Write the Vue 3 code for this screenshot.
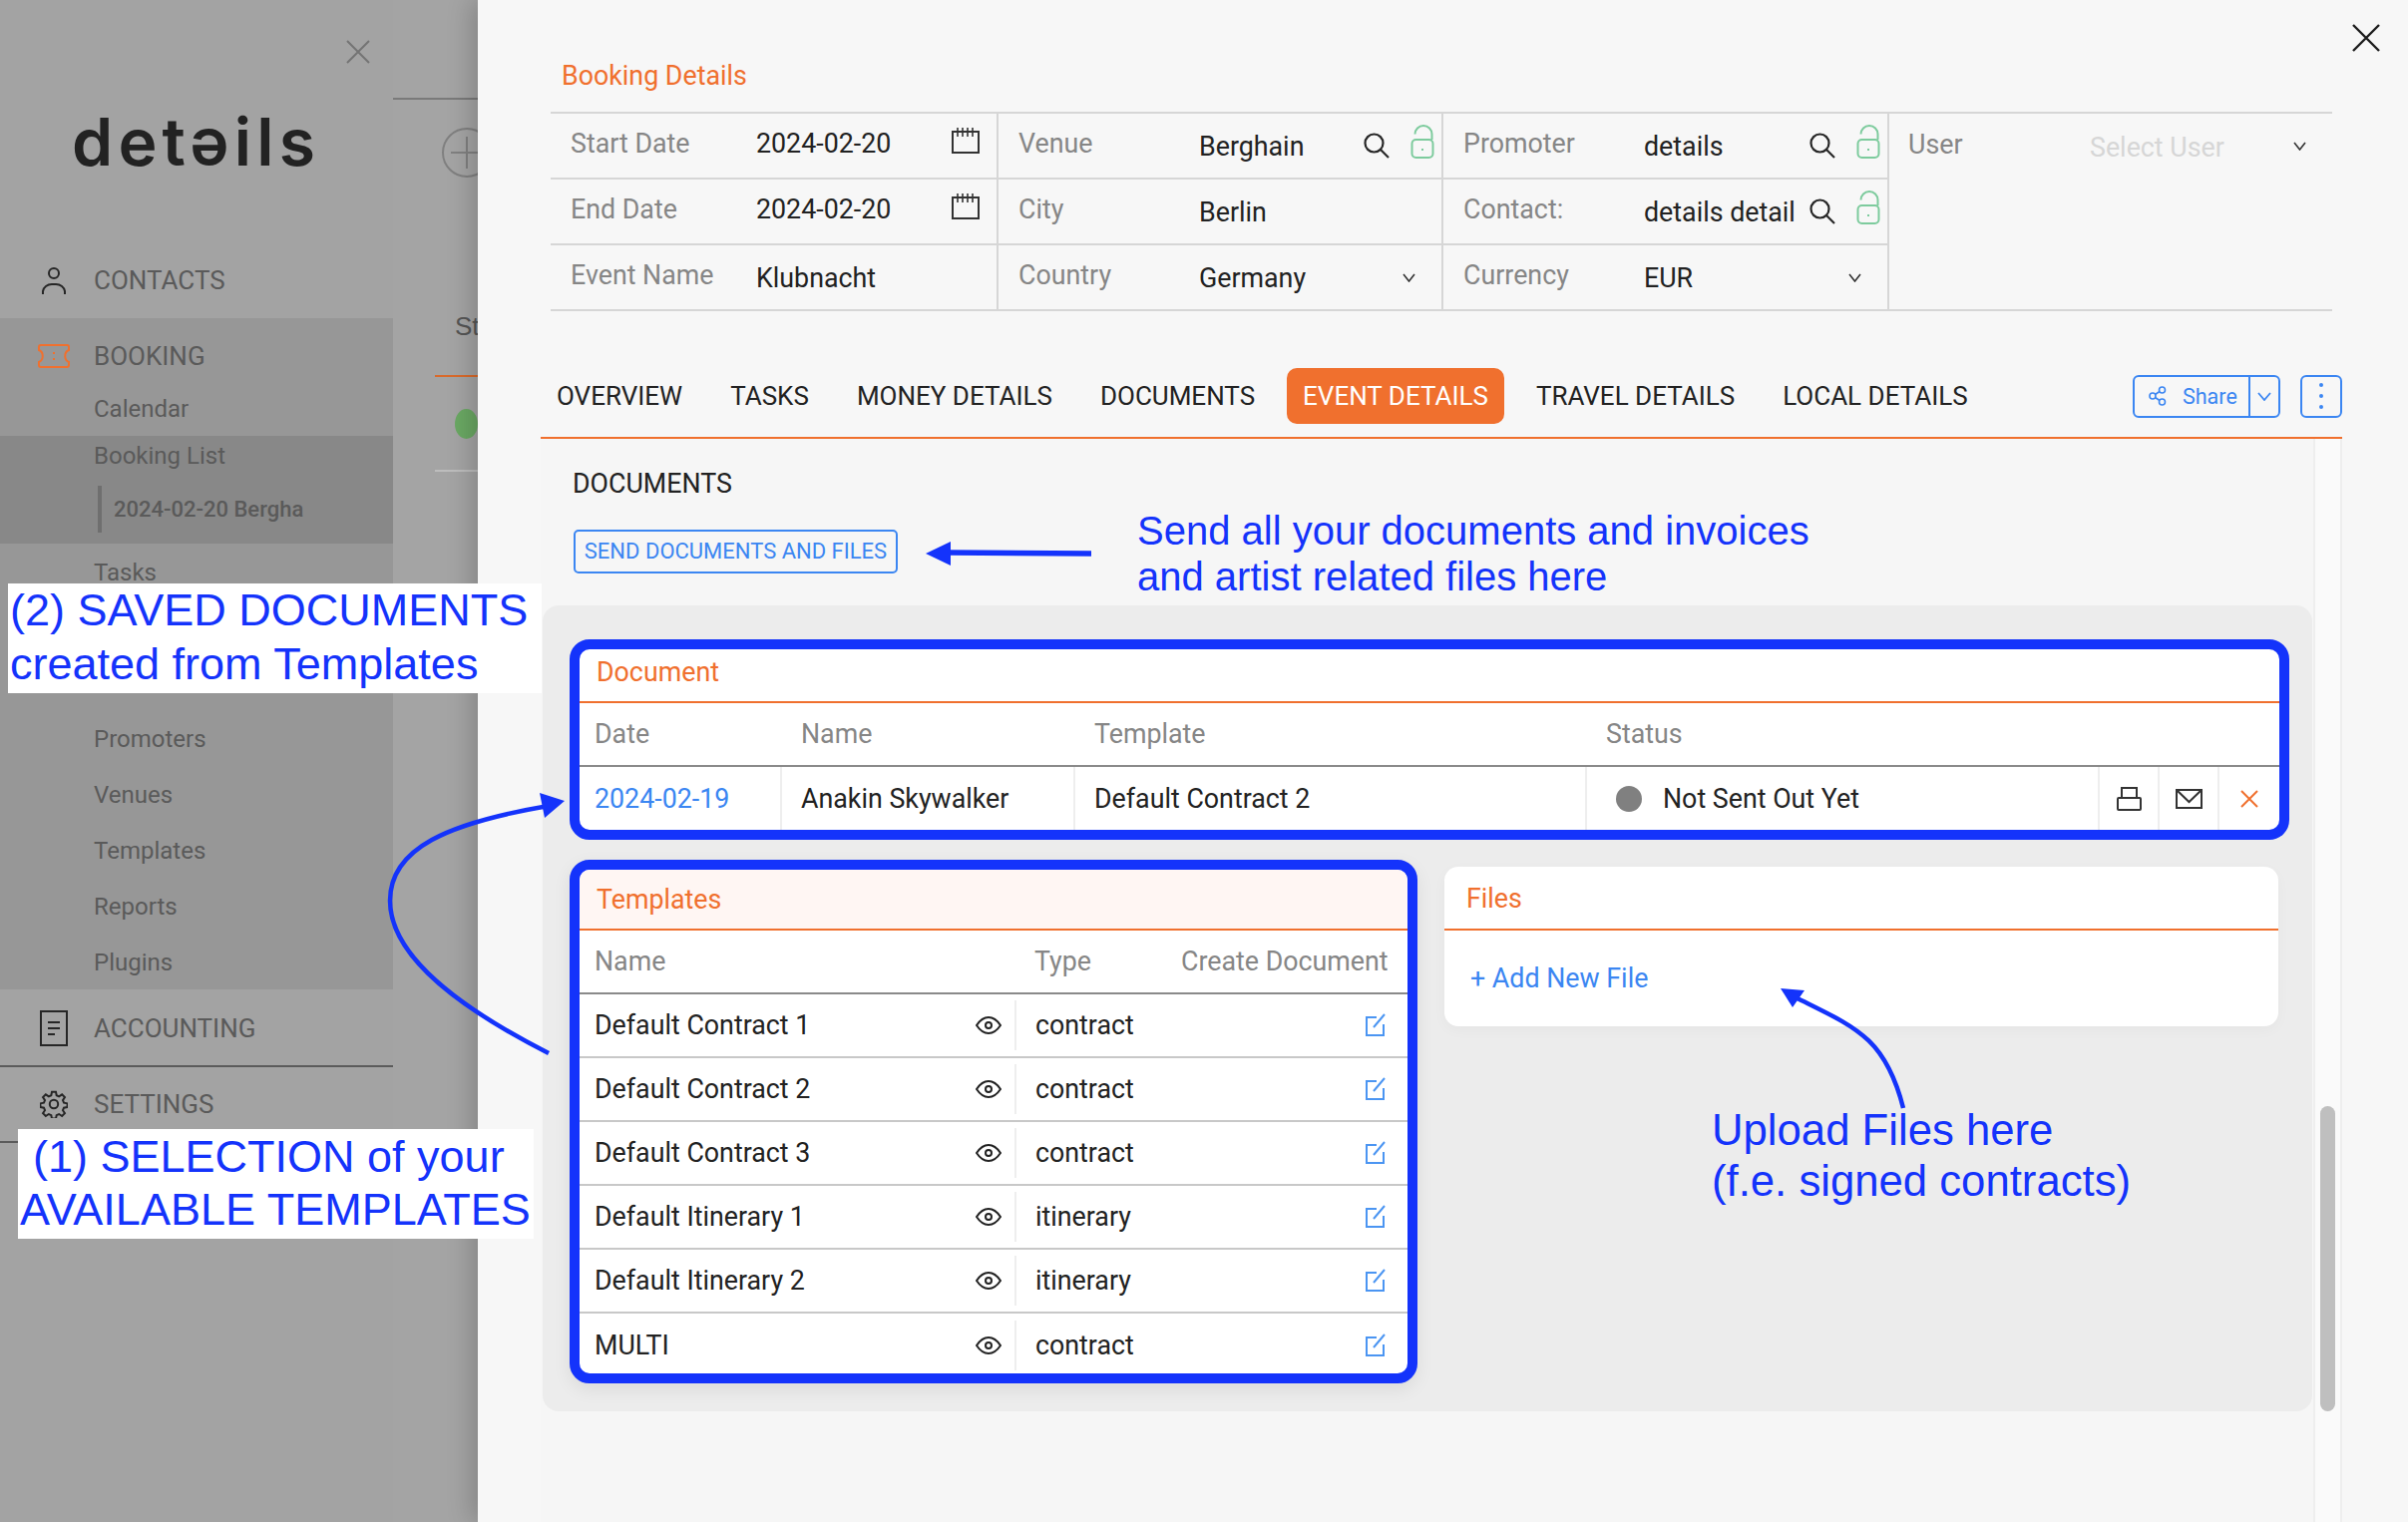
<script setup>
const row1 = [
  { label: 'Start Date', value: '2024-02-20', icon: 'cal' },
  { label: 'End Date', value: '2024-02-20', icon: 'cal' },
  { label: 'Event Name', value: 'Klubnacht', low: true },
]
const row2 = [
  { label: 'Venue', value: 'Berghain', icon: 'find', low: true },
  { label: 'City', value: 'Berlin', low: true },
  { label: 'Country', value: 'Germany', icon: 'drop', low: true },
]
const row3 = [
  { label: 'Promoter', value: 'details', icon: 'find', low: true },
  { label: 'Contact:', value: 'details detail', icon: 'find', low: true },
  { label: 'Currency', value: 'EUR', icon: 'drop', low: true },
]
const columns = [
  { w: 449, lw: 186, pad: 20, rows: row1 },
  { w: 446, lw: 181, pad: 20, rows: row2 },
  { w: 447, lw: 181, pad: 20, rows: row3 },
]
const tabs = ['OVERVIEW', 'TASKS', 'MONEY DETAILS', 'DOCUMENTS', 'EVENT DETAILS', 'TRAVEL DETAILS', 'LOCAL DETAILS']
const subItems = ['Promoters', 'Venues', 'Templates', 'Reports', 'Plugins']
const templates = [
  { name: 'Default Contract 1', type: 'contract' },
  { name: 'Default Contract 2', type: 'contract' },
  { name: 'Default Contract 3', type: 'contract' },
  { name: 'Default Itinerary 1', type: 'itinerary' },
  { name: 'Default Itinerary 2', type: 'itinerary' },
  { name: 'MULTI', type: 'contract' },
]
</script>

<template>
  <div class="page">
    <aside class="sidebar">
      <div class="side-top">
        <svg class="side-close" width="24" height="24" viewBox="0 0 24 24"><path d="M1 1 23 23M23 1 1 23" stroke="#747474" stroke-width="2" fill="none" /></svg>
        <div class="logo">detəils</div>
      </div>
      <div class="nav-main">
        <svg class="person" width="24" height="28" viewBox="0 0 24 28" fill="none" stroke="#262626" stroke-width="2"><circle cx="12" cy="7" r="5" /><path d="M1 28v-3a9 8 0 0 1 9-7h4a9 8 0 0 1 9 7v3" /></svg>
        <span>CONTACTS</span>
      </div>
      <div class="band">
        <div class="nav-main">
          <svg class="ticket" width="32" height="24" viewBox="0 0 32 24" fill="none" stroke="#f0702e" stroke-width="2"><path d="M3 1h26a2 2 0 0 1 2 2v3c-5 2-5 10 0 12v3a2 2 0 0 1-2 2H3a2 2 0 0 1-2-2v-3c5-2 5-10 0-12V3a2 2 0 0 1 2-2Z" /><path d="M16 8v2M16 14v2" /></svg>
          <span>BOOKING</span>
        </div>
        <div class="sub calendar">Calendar</div>
        <div class="band-dark">
          <div class="sub list">Booking List</div>
          <div class="current">2024-02-20 Bergha</div>
        </div>
        <div class="sub item tasks">Tasks</div>
        <div v-for="s in subItems" :key="s" class="sub item">{{ s }}</div>
      </div>
      <div class="nav-main ruled">
        <svg width="28" height="36" viewBox="0 0 28 36" fill="none" stroke="#262626" stroke-width="2"><rect x="1" y="1" width="26" height="34" /><path d="M8 12h12M8 18h12M8 24h7" /></svg>
        <span>ACCOUNTING</span>
      </div>
      <div class="nav-main ruled settings">
        <svg width="28" height="28" viewBox="0 0 24 24" fill="none" stroke="#262626" stroke-width="1.7"><circle cx="12" cy="12" r="3.6" /><path d="M10.300 1.500h3.400l.6 3 2.100.9 2.600-1.700 2.400 2.400-1.700 2.600.9 2.100 3 .6v3.200l-3 .6-.9 2.100 1.700 2.600-2.400 2.400-2.600-1.700-2.100.9-.6 3h-3.400l-.6-3-2.100-.9-2.600 1.700-2.400-2.400 1.700-2.600-.9-2.100-3-.6v-3.200l3-.6.9-2.100-1.700-2.600 2.400-2.400 2.600 1.700 2.100-.9Z" /></svg>
        <span>SETTINGS</span>
      </div>
    </aside>

    <div class="back">
      <div class="back-rule"></div>
      <svg class="back-plus" width="52" height="52" viewBox="0 0 52 52" fill="none" stroke="#808080" stroke-width="2"><circle cx="26" cy="26" r="24" /><path d="M26 10v32M10 26h32" /></svg>
      <div class="back-head">St</div>
      <div class="back-row"><i></i></div>
    </div>

    <section class="drawer">
      <svg class="drawer-close" width="28" height="28" viewBox="0 0 28 28"><path d="M1 1 27 27M27 1 1 27" stroke="#1c1c1c" stroke-width="2.400" fill="none" /></svg>
      <h2 class="title">Booking Details</h2>

      <div class="form">
        <div v-for="(col, c) in columns" :key="c" class="col" :style="{ width: col.w + 'px' }">
          <div v-for="r in col.rows" :key="r.label" class="cell" :style="{ paddingLeft: col.pad + 'px' }">
            <span class="label" :style="{ width: col.lw + 'px' }">{{ r.label }}</span>
            <span class="value" :class="{ low: r.low }">{{ r.value }}</span>
            <svg v-if="r.icon === 'cal'" class="ic-cal" width="28" height="26" viewBox="0 0 28 26" fill="none" stroke="#333" stroke-width="2"><rect x="1" y="4" width="26" height="21" /><path d="M6 0v9M11 0v9M16 0v9M21 0v9" stroke-width="1.600" /></svg>
            <template v-if="r.icon === 'find'">
              <svg class="ic-find" width="26" height="26" viewBox="0 0 26 26" fill="none" stroke="#262626" stroke-width="2.200"><circle cx="10.500" cy="10.500" r="9" /><path d="M17 17 25 25" /></svg>
              <svg class="ic-lock" width="24" height="34" viewBox="0 0 24 34" fill="none" stroke="#7dcb9d" stroke-width="2"><rect x="1.500" y="15" width="21" height="18" rx="4" /><path d="M21.500 15V9.500a8.500 8.500 0 0 0-17 0" /><path d="M12 24v2" /></svg>
            </template>
            <svg v-if="r.icon === 'drop'" class="ic-drop" width="13" height="9" viewBox="0 0 13 9" fill="none" stroke="#333" stroke-width="1.600"><path d="M1 1 6.500 8 12 1" /></svg>
          </div>
        </div>
        <div class="col last">
          <div class="cell user">
            <span class="label">User</span>
            <span class="value low placeholder">Select User</span>
            <svg class="ic-drop" width="13" height="9" viewBox="0 0 13 9" fill="none" stroke="#333" stroke-width="1.600"><path d="M1 1 6.500 8 12 1" /></svg>
          </div>
        </div>
      </div>

      <nav class="tabs">
        <a v-for="t in tabs" :key="t" class="tab" :class="{ active: t === 'EVENT DETAILS' }">{{ t }}</a>
        <div class="tab-tools">
          <div class="share">
            <span class="share-main">
              <svg width="18" height="20" viewBox="0 0 18 20" fill="none" stroke="#3b86f2" stroke-width="1.600"><circle cx="4" cy="10" r="3" /><circle cx="13.500" cy="4" r="3" /><circle cx="13.500" cy="16" r="3" /><path d="M6.500 8.500 11 5.500M6.500 11.500 11 14.500" /></svg>
              Share
            </span>
            <span class="share-drop"><svg width="14" height="9" viewBox="0 0 14 9" fill="none" stroke="#3b86f2" stroke-width="1.800"><path d="M1 1 7 8 13 1" /></svg></span>
          </div>
          <div class="more"><i></i><i></i><i></i></div>
        </div>
      </nav>

      <div class="lower">
        <div class="content">
          <div class="doc-title">DOCUMENTS</div>
          <button class="send">SEND DOCUMENTS AND FILES</button>
          <div class="panel">
            <div class="card marked">
              <div class="card-head doc-head">Document</div>
              <div class="doc-grid heads">
                <span>Date</span><span>Name</span><span>Template</span><span>Status</span>
              </div>
              <div class="doc-grid row">
                <span class="link">2024-02-19</span>
                <span class="who">Anakin Skywalker</span>
                <span>Default Contract 2</span>
                <span class="status"><i class="dot"></i>Not Sent Out Yet</span>
                <span class="act">
                  <svg width="25" height="24" viewBox="0 0 25 24" fill="none" stroke="#333" stroke-width="2"><path d="M5 11V1h15v10" /><rect x="1" y="11" width="23" height="12" rx="1" /></svg>
                </span>
                <span class="act">
                  <svg width="27" height="20" viewBox="0 0 27 20" fill="none" stroke="#333" stroke-width="2"><rect x="1" y="1" width="25" height="18" /><path d="M1 1 13.500 13 26 1" /></svg>
                </span>
                <span class="act">
                  <svg width="18" height="18" viewBox="0 0 18 18" fill="none" stroke="#f0702e" stroke-width="2"><path d="M1 1 17 17M17 1 1 17" /></svg>
                </span>
              </div>
            </div>

            <div class="bottom">
              <div class="card marked templates">
                <div class="card-head tinted">Templates</div>
                <div class="tpl-heads">
                  <span class="tpl-name">Name</span>
                  <span class="tpl-type">Type</span>
                  <span>Create Document</span>
                </div>
                <div v-for="t in templates" :key="t.name" class="tpl-row">
                  <span class="tpl-name">{{ t.name }}</span>
                  <svg class="eye" width="26" height="18" viewBox="0 0 26 18" fill="none" stroke="#222" stroke-width="2"><path d="M1 9C5 3 9 1 13 1s8 2 12 8c-4 6-8 8-12 8S5 15 1 9Z" /><circle cx="13" cy="9" r="3" /></svg>
                  <span class="tpl-type">{{ t.type }}</span>
                  <svg class="edit" width="22" height="24" viewBox="0 0 22 24" fill="none" stroke="#4b95f2" stroke-width="2"><path d="M12 4H2v18h17V11" /><path d="M9 14 20 1" /></svg>
                </div>
              </div>
              <div class="card files">
                <div class="card-head file-head">Files</div>
                <div class="add">+ Add New File</div>
              </div>
            </div>
          </div>
        </div>
        <div class="track"><div class="thumb"></div></div>
      </div>
    </section>

    <!-- annotations drawn over the screenshot -->
    <div class="note note-saved">(2) SAVED DOCUMENTS<br />created from Templates</div>
    <div class="note note-select">(1) SELECTION of your<br />AVAILABLE TEMPLATES</div>
    <div class="note-plain note-send">Send all your documents and invoices<br />and artist related files here</div>
    <div class="note-plain note-upload">Upload Files here<br />(f.e. signed contracts)</div>
    <svg class="arrows" width="2414" height="1526" viewBox="0 0 2414 1526" fill="none" stroke="#1433fb">
      <path d="M1094 555 948 554" stroke-width="5.500" />
      <path d="M928 555 953 543V567Z" fill="#1433fb" stroke="none" />
      <path d="M550 1056C440 1000 391 950 391 903 391 850 450 825 550 808" stroke-width="4.500" />
      <path d="M566 803 541 795 546 820Z" fill="#1433fb" stroke="none" />
      <path d="M1908 1111C1890 1040 1860 1030 1800 1000" stroke-width="4.500" />
      <path d="M1785 991 1809 993 1797 1010Z" fill="#1433fb" stroke="none" />
    </svg>
  </div>
</template>

<style scoped>
.page {
  position: relative;
  display: flex;
  width: 2414px;
  height: 1526px;
  overflow: hidden;
  font-family: Roboto, "Liberation Sans", sans-serif;
  font-size: 26.8px;
  color: #222;
  background: #a4a4a4;
}
.page * {
  box-sizing: border-box;
}

.sidebar {
  width: 394px;
  flex: none;
  background: #a3a3a3;
  color: #5a5a5a;
}
.side-top {
  position: relative;
  height: 243px;
}
.side-close {
  position: absolute;
  top: 40px;
  right: 23px;
}
.logo {
  position: absolute;
  left: 72px;
  top: 102px;
  font-family: Inter, sans-serif;
  font-weight: 600;
  font-size: 66px;
  line-height: 80px;
  letter-spacing: 5.200px;
  color: #222;
}
.nav-main {
  display: flex;
  align-items: center;
  height: 76px;
  padding-left: 40px;
  font-size: 26px;
}
.nav-main span {
  position: absolute;
  left: 94px;
}
.nav-main .person {
  margin-left: 2px;
}
.nav-main .ticket {
  margin-left: -2px;
}
.band {
  background: #979797;
}
.sub {
  padding-left: 94px;
  font-size: 24px;
}
.calendar {
  height: 42px;
  line-height: 30px;
}
.band-dark {
  height: 108px;
  background: #888;
}
.list {
  height: 40px;
  line-height: 40px;
}
.current {
  margin: 10px 0 0 98px;
  height: 47px;
  line-height: 47px;
  padding-left: 12px;
  border-left: 4px solid #6f6f6f;
  font-size: 22px;
  font-weight: 500;
}
.item {
  height: 56px;
  line-height: 58px;
}
.tasks {
  margin-bottom: 111px;
}
.ruled {
  height: 78px;
  padding-top: 2px;
  border-bottom: 2px solid #5b5b5b;
}
.settings {
  height: 76px;
  padding-top: 0;
}

.back {
  width: 85px;
  flex: none;
  color: #555;
}
.back-rule {
  height: 100px;
  border-bottom: 2px solid #7a7a7a;
}
.back-plus {
  display: block;
  margin: 27px 0 0 48px;
}
.back-head {
  margin: 133px 0 0 62px;
  font-family: "Liberation Sans", sans-serif;
  font-size: 26px;
  height: 64px;
  white-space: nowrap;
}
.back-row {
  margin-left: 42px;
  height: 97px;
  border-top: 2px solid #d96a2c;
  border-bottom: 2px solid #bdbdbd;
  display: flex;
  align-items: center;
}
.back-row i {
  width: 28px;
  height: 30px;
  margin-left: 20px;
  border-radius: 50%;
  background: #6aa863;
}

.drawer {
  position: relative;
  width: 1935px;
  flex: none;
  background: #f7f7f7;
  box-shadow: -6px 0 24px rgba(0, 0, 0, 0.2);
}
.drawer-close {
  position: absolute;
  top: 24px;
  right: 28px;
}
.title {
  margin: 0;
  padding: 60px 0 0 84px;
  height: 112px;
  font-size: 26.8px;
  line-height: 32px;
  font-weight: 400;
  color: #f0702e;
}

.form {
  display: flex;
  margin-left: 73px;
  width: 1786px;
  height: 200px;
  border-top: 2px solid #d6d6d6;
  border-bottom: 2px solid #d6d6d6;
}
.col {
  flex: none;
  border-right: 2px solid #d6d6d6;
}
.col.last {
  flex: 1;
  border: 0;
}
.cell {
  position: relative;
  display: flex;
  align-items: center;
  height: 66px;
  padding-bottom: 4px;
  border-bottom: 2px solid #d6d6d6;
  white-space: nowrap;
}
.cell:last-child {
  height: 64px;
  border-bottom: 0;
}
.cell.user {
  height: 66px;
  padding-left: 19px;
}
.label {
  flex: none;
  color: #868686;
}
.user .label {
  width: 182px;
}
.value.low {
  padding-top: 5px;
}
.placeholder {
  color: #d6d6d6;
}
.ic-cal {
  position: absolute;
  right: 17px;
  top: 14px;
}
.ic-find {
  position: absolute;
  right: 52px;
  top: 19px;
}
.ic-lock {
  position: absolute;
  right: 7px;
  top: 11px;
}
.ic-drop {
  position: absolute;
  right: 26px;
  top: 28px;
}

.tabs {
  display: flex;
  align-items: center;
  margin: 58px 0 0 63px;
  padding: 0 0 14px 16px;
  width: 1806px;
  height: 70px;
  border-bottom: 2px solid #f0702e;
}
.tab {
  margin-right: 48px;
  font-size: 26px;
  white-space: nowrap;
}
.tab.active {
  margin: 0 32px 0 -16px;
  padding: 0 16px;
  height: 56px;
  line-height: 56px;
  border-radius: 10px;
  background: #f0702e;
  color: #fff;
}
.tab-tools {
  display: flex;
  gap: 20px;
  margin-left: auto;
}
.share,
.more {
  display: flex;
  height: 43px;
  border: 2px solid #3b86f2;
  border-radius: 6px;
  color: #3b86f2;
  font-size: 21.500px;
}
.share-main {
  display: flex;
  align-items: center;
  gap: 16px;
  width: 116px;
  padding-left: 14px;
  border-right: 2px solid #3b86f2;
}
.share-drop {
  display: flex;
  align-items: center;
  justify-content: center;
  width: 28px;
}
.more {
  flex-direction: column;
  align-items: center;
  justify-content: center;
  gap: 7px;
  width: 42px;
}
.more i {
  width: 4px;
  height: 4px;
  border-radius: 50%;
  background: #3b86f2;
}

.lower {
  display: flex;
  margin-left: 63px;
  height: 1087px;
}
.content {
  width: 1777px;
  flex: none;
  background: #f6f6f6;
}
.doc-title {
  padding-left: 32px;
  margin-top: 29px;
  height: 32px;
  line-height: 32px;
}
.send {
  display: block;
  margin: 30px 0 0 33px;
  width: 325px;
  height: 44px;
  padding: 0 0 2px;
  background: transparent;
  border: 2px solid #3b86f2;
  border-radius: 5px;
  color: #3b86f2;
  font-family: inherit;
  font-size: 22px;
  white-space: nowrap;
}
.panel {
  margin: 32px 0 0 2px;
  width: 1774px;
  height: 808px;
  padding: 34px 23px 0 27px;
  border-radius: 16px;
  background: #ececec;
}
.card {
  background: #fff;
  border-radius: 14px;
}
.card.marked {
  border: 10px solid #1433fb;
  border-radius: 20px;
  overflow: hidden;
}
.card-head {
  display: flex;
  align-items: center;
  height: 54px;
  padding-left: 17px;
  border-bottom: 2px solid #f0702e;
  color: #f0702e;
}
.doc-head {
  padding-bottom: 6px;
}
.tinted {
  background: #fff6f3;
  height: 61px;
}
.file-head {
  height: 64px;
  padding: 2px 0 0 22px;
}
.doc-grid {
  display: grid;
  grid-template-columns: 201px 294px 513px 514px 60px 60px 1fr;
}
.heads {
  height: 64px;
  align-items: center;
  border-bottom: 2px solid #8a8a8a;
  color: #868686;
}
.heads span {
  padding-left: 21px;
}
.heads span:first-child {
  padding-left: 15px;
}
.row {
  height: 63px;
}
.row > span {
  display: flex;
  align-items: center;
  padding-left: 19px;
  border-left: 2px solid #eee;
}
.row > span:first-child {
  padding-left: 15px;
  border-left: 0;
}
.row > .status {
  padding-left: 29px;
}
.link {
  color: #3b86f2;
}
.dot {
  width: 26px;
  height: 26px;
  margin-right: 21px;
  border-radius: 50%;
  background: #808080;
}
.row > .act {
  justify-content: center;
  padding: 0;
}
.bottom {
  display: flex;
  align-items: flex-start;
  gap: 27px;
  margin-top: 20px;
}
.templates {
  width: 850px;
  height: 525px;
  flex: none;
  box-shadow: 0 6px 18px rgba(0, 0, 0, 0.08);
}
.tpl-heads {
  display: flex;
  align-items: center;
  height: 64px;
  border-bottom: 2px solid #8a8a8a;
  color: #868686;
}
.tpl-heads .tpl-name {
  width: 456px;
}
.tpl-heads .tpl-type {
  width: 147px;
  padding: 0;
  border: 0;
}
.tpl-name {
  padding-left: 15px;
}
.tpl-row {
  position: relative;
  display: flex;
  align-items: center;
  height: 64px;
  border-bottom: 2px solid #c8c8c8;
}
.tpl-row:last-child {
  border-bottom: 0;
}
.tpl-row .tpl-name {
  width: 397px;
}
.eye {
  flex: none;
  width: 26px;
  margin-right: 13px;
}
.tpl-row .tpl-type {
  height: 50px;
  line-height: 50px;
  padding-left: 19px;
  border-left: 2px solid #eee;
}
.edit {
  position: absolute;
  right: 21px;
}
.files {
  width: 836px;
  height: 160px;
  margin-top: 7px;
  box-shadow: 0 4px 14px rgba(0, 0, 0, 0.03);
}
.add {
  padding: 32px 0 0 26px;
  color: #3b86f2;
}
.track {
  width: 29px;
  flex: none;
  border-left: 2px solid #eee;
  border-right: 2px solid #eee;
  background: #fafafa;
  padding: 669px 0 0 5px;
}
.thumb {
  width: 15px;
  height: 306px;
  border-radius: 8px;
  background: #bfbfbf;
}

.note,
.note-plain {
  position: absolute;
  font-family: "Liberation Sans", sans-serif;
  color: #1433fb;
  white-space: nowrap;
}
.note {
  background: #fff;
}
.note-saved {
  left: 8px;
  top: 585px;
  width: 535px;
  height: 110px;
  padding: 0 0 0 2px;
  font-size: 45px;
  line-height: 54px;
}
.note-select {
  left: 18px;
  top: 1132px;
  width: 517px;
  height: 110px;
  padding: 1px 0 0 2px;
  text-indent: 13px;
  font-size: 45px;
  line-height: 53px;
}
.note-send {
  left: 1140px;
  top: 509px;
  font-size: 40px;
  line-height: 46px;
}
.note-upload {
  left: 1716px;
  top: 1107px;
  font-size: 43.700px;
  line-height: 51px;
}
.arrows {
  position: absolute;
  left: 0;
  top: 0;
  pointer-events: none;
}
</style>
